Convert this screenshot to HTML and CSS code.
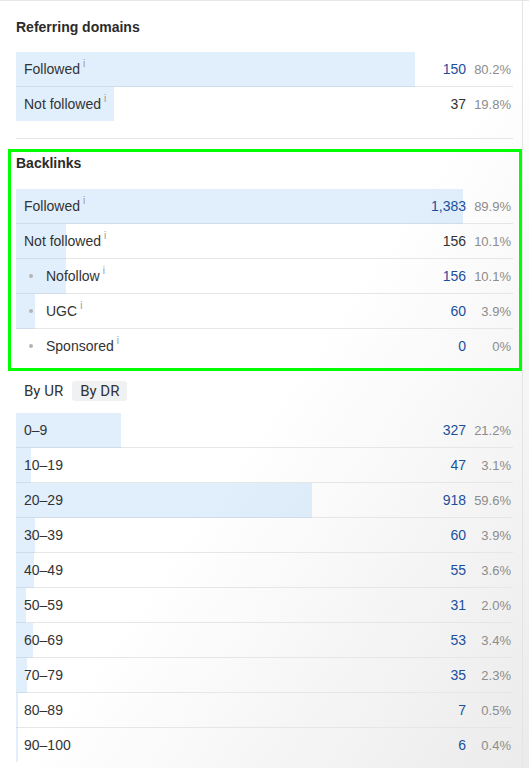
FILE: index.html
```html
<!DOCTYPE html>
<html>
<head>
<meta charset="utf-8">
<link rel="stylesheet" href="styles.css">
</head>
<body>
<div class="page">
  <div class="panel">
    <div class="section-rd">
      <h3 class="heading">Referring domains</h3>
      <div class="rows">
        <div class="row"><span class="bar" style="width:80.2%"></span><span class="label">Followed<sup class="info">i</sup></span><span class="num">150</span><span class="pct">80.2%</span></div>
        <div class="row"><span class="bar" style="width:19.8%"></span><span class="label">Not followed<sup class="info">i</sup></span><span class="num plain">37</span><span class="pct">19.8%</span></div>
      </div>
    </div>

    <div class="section-bl">
      <h3 class="heading heading-bl">Backlinks</h3>
      <div class="rows">
        <div class="row"><span class="bar" style="width:89.9%"></span><span class="label">Followed<sup class="info">i</sup></span><span class="num">1,383</span><span class="pct">89.9%</span></div>
        <div class="row"><span class="bar" style="width:10.1%"></span><span class="label">Not followed<sup class="info">i</sup></span><span class="num plain">156</span><span class="pct">10.1%</span></div>
        <div class="row"><span class="bar" style="width:10.1%"></span><span class="label"><span class="dot"></span>Nofollow<sup class="info">i</sup></span><span class="num">156</span><span class="pct">10.1%</span></div>
        <div class="row"><span class="bar" style="width:3.9%"></span><span class="label"><span class="dot"></span>UGC<sup class="info">i</sup></span><span class="num">60</span><span class="pct">3.9%</span></div>
        <div class="row"><span class="label"><span class="dot"></span>Sponsored<sup class="info">i</sup></span><span class="num">0</span><span class="pct">0%</span></div>
      </div>
    </div>

    <div class="tabs">
      <span class="tab">By UR</span>
      <span class="tab tab-active">By DR</span>
    </div>

    <div class="rows table">
      <div class="row"><span class="bar" style="width:21.2%"></span><span class="label">0–9</span><span class="num">327</span><span class="pct">21.2%</span></div>
      <div class="row"><span class="bar" style="width:3.1%"></span><span class="label">10–19</span><span class="num">47</span><span class="pct">3.1%</span></div>
      <div class="row"><span class="bar" style="width:59.6%"></span><span class="label">20–29</span><span class="num">918</span><span class="pct">59.6%</span></div>
      <div class="row"><span class="bar" style="width:3.9%"></span><span class="label">30–39</span><span class="num">60</span><span class="pct">3.9%</span></div>
      <div class="row"><span class="bar" style="width:3.6%"></span><span class="label">40–49</span><span class="num">55</span><span class="pct">3.6%</span></div>
      <div class="row"><span class="bar" style="width:2.0%"></span><span class="label">50–59</span><span class="num">31</span><span class="pct">2.0%</span></div>
      <div class="row"><span class="bar" style="width:3.4%"></span><span class="label">60–69</span><span class="num">53</span><span class="pct">3.4%</span></div>
      <div class="row"><span class="bar" style="width:2.3%"></span><span class="label">70–79</span><span class="num">35</span><span class="pct">2.3%</span></div>
      <div class="row"><span class="bar" style="width:0.5%"></span><span class="label">80–89</span><span class="num">7</span><span class="pct">0.5%</span></div>
      <div class="row"><span class="bar" style="width:0.4%"></span><span class="label">90–100</span><span class="num">6</span><span class="pct">0.4%</span></div>
    </div>
  </div>
</div>
</body>
</html>
```

FILE: styles.css
```css
html, body {
  margin: 0;
  padding: 0;
}

.page {
  min-height: 768px;
  box-sizing: border-box;
  border-top: 1px solid #e6e6e6;
  background: linear-gradient(to bottom right, #ffffff 52%, #ebebeb 100%);
  font-family: "Liberation Sans", Arial, sans-serif;
  color: #333;
}

.panel {
  width: 523px;
  box-sizing: border-box;
  min-height: 767px;
  padding: 16px 9px 0 16px;
  border-right: 1px solid #e4e4e4;
}

.heading {
  margin: 0 0 15px 0;
  font-size: 14px;
  line-height: 20px;
  font-weight: bold;
  color: #2b2b2b;
}

.heading-bl {
  margin-bottom: 16px;
}

.section-rd {
  padding-bottom: 17px;
  border-bottom: 1px solid #e6e6e6;
}

.section-bl {
  margin: 10px -9px 0 -8px;
  border: 3px solid #00ff00;
  padding: 1px 6px 5px 5px;
}

.rows {
  display: flex;
  flex-direction: column;
}

.row {
  position: relative;
  display: flex;
  align-items: center;
  height: 34px;
  padding: 0 2px 0 8px;
  border-bottom: 1px solid #e6e6e6;
}

.row:last-child {
  border-bottom: none;
}

.bar {
  position: absolute;
  left: 0;
  top: 0;
  bottom: -1px;
  background: rgba(155, 202, 248, 0.3);
}

.row:last-child .bar {
  bottom: 0;
}

.label,
.num,
.pct {
  position: relative;
}

.label {
  flex: 1;
  display: flex;
  align-items: center;
  font-size: 14px;
  color: #333;
  white-space: nowrap;
}

.info {
  font-size: 10px;
  color: #999;
  margin-left: 3px;
  position: relative;
  top: -5px;
  vertical-align: baseline;
  line-height: 1;
}

.dot {
  display: inline-block;
  width: 4px;
  height: 4px;
  border-radius: 50%;
  background: #b4b4b4;
  margin: 0 13px 0 5px;
}

.num {
  font-size: 14px;
  color: #1b4f9c;
}

.num.plain {
  color: #333;
}

.pct {
  width: 45px;
  text-align: right;
  font-size: 13px;
  color: #8c8c8c;
}

.tabs {
  display: flex;
  gap: 1px;
  margin-top: 10px;
}

.tab {
  font-family: Roboto, "Liberation Sans", sans-serif;
  font-size: 15px;
  line-height: 20px;
  padding: 0 8px;
  border-radius: 3px;
  color: #333;
}

.tab-active {
  background: #f0f1f3;
}

.table {
  margin-top: 12px;
}
```
